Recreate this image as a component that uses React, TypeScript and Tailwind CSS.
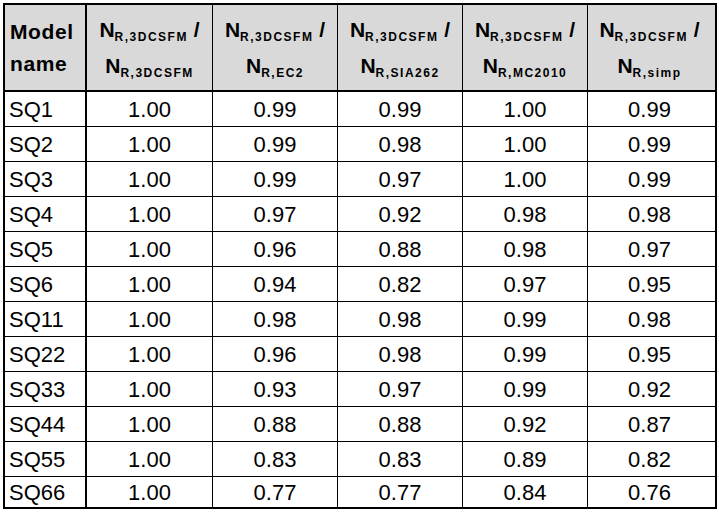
const ROWS: [string, string, string, string, string, string][] = [
  ['SQ1', '1.00', '0.99', '0.99', '1.00', '0.99'],
  ['SQ2', '1.00', '0.99', '0.98', '1.00', '0.99'],
  ['SQ3', '1.00', '0.99', '0.97', '1.00', '0.99'],
  ['SQ4', '1.00', '0.97', '0.92', '0.98', '0.98'],
  ['SQ5', '1.00', '0.96', '0.88', '0.98', '0.97'],
  ['SQ6', '1.00', '0.94', '0.82', '0.97', '0.95'],
  ['SQ11', '1.00', '0.98', '0.98', '0.99', '0.98'],
  ['SQ22', '1.00', '0.96', '0.98', '0.99', '0.95'],
  ['SQ33', '1.00', '0.93', '0.97', '0.99', '0.92'],
  ['SQ44', '1.00', '0.88', '0.88', '0.92', '0.87'],
  ['SQ55', '1.00', '0.83', '0.83', '0.89', '0.82'],
  ['SQ66', '1.00', '0.77', '0.77', '0.84', '0.76'],
];

const DENOMS = ['3DCSFM', 'EC2', 'SIA262', 'MC2010', 'simp'];

// widths of the data columns (first one is the name column)
const COL_W = ['w-[126px]', 'w-[125px]', 'w-[125px]', 'w-[125px]', 'w-[123px]'];

function Ratio({ denom }: { denom: string }) {
  return (
    <div className="leading-[36px] text-center">
      <div>
        N<sub className="text-[12px] tracking-[1.5px] -bottom-1">R,3DCSFM</sub> /
      </div>
      <div>
        N<sub className="text-[12px] tracking-[1.5px] -bottom-1">R,{denom}</sub>
      </div>
    </div>
  );
}

export default function App() {
  return (
    <div className="bg-white w-[719px] h-[513px] pt-[3px] pl-[3px] text-black font-['Liberation_Sans',Arial,sans-serif]">
      <div className="w-[714px] border-2 border-black">
        <div className="flex h-[87px] bg-[#d9d9d9] border-b-2 border-black font-bold text-[21px]">
          <div className="w-[82px] border-r-2 border-black pl-[5px] flex items-center leading-[32px] tracking-[0.6px]">
            <div>
              Model
              <br />
              name
            </div>
          </div>
          {DENOMS.map((d, i) => (
            <div
              key={d}
              className={`${COL_W[i]} ${i < 4 ? 'border-r border-black' : ''} flex items-center justify-center shrink-0`}
            >
              <Ratio denom={d} />
            </div>
          ))}
        </div>
        {ROWS.map((row, r) => (
          <div
            key={row[0]}
            className={`flex text-[22px] ${r < ROWS.length - 1 ? 'h-[35px] border-b border-black' : 'h-[30px]'}`}
          >
            <div className="w-[82px] border-r-2 border-black pl-[4px] flex items-center">{row[0]}</div>
            {row.slice(1).map((v, i) => (
              <div
                key={i}
                className={`${COL_W[i]} ${i < 4 ? 'border-r border-black' : ''} flex items-center justify-center shrink-0`}
              >
                {v}
              </div>
            ))}
          </div>
        ))}
      </div>
    </div>
  );
}
